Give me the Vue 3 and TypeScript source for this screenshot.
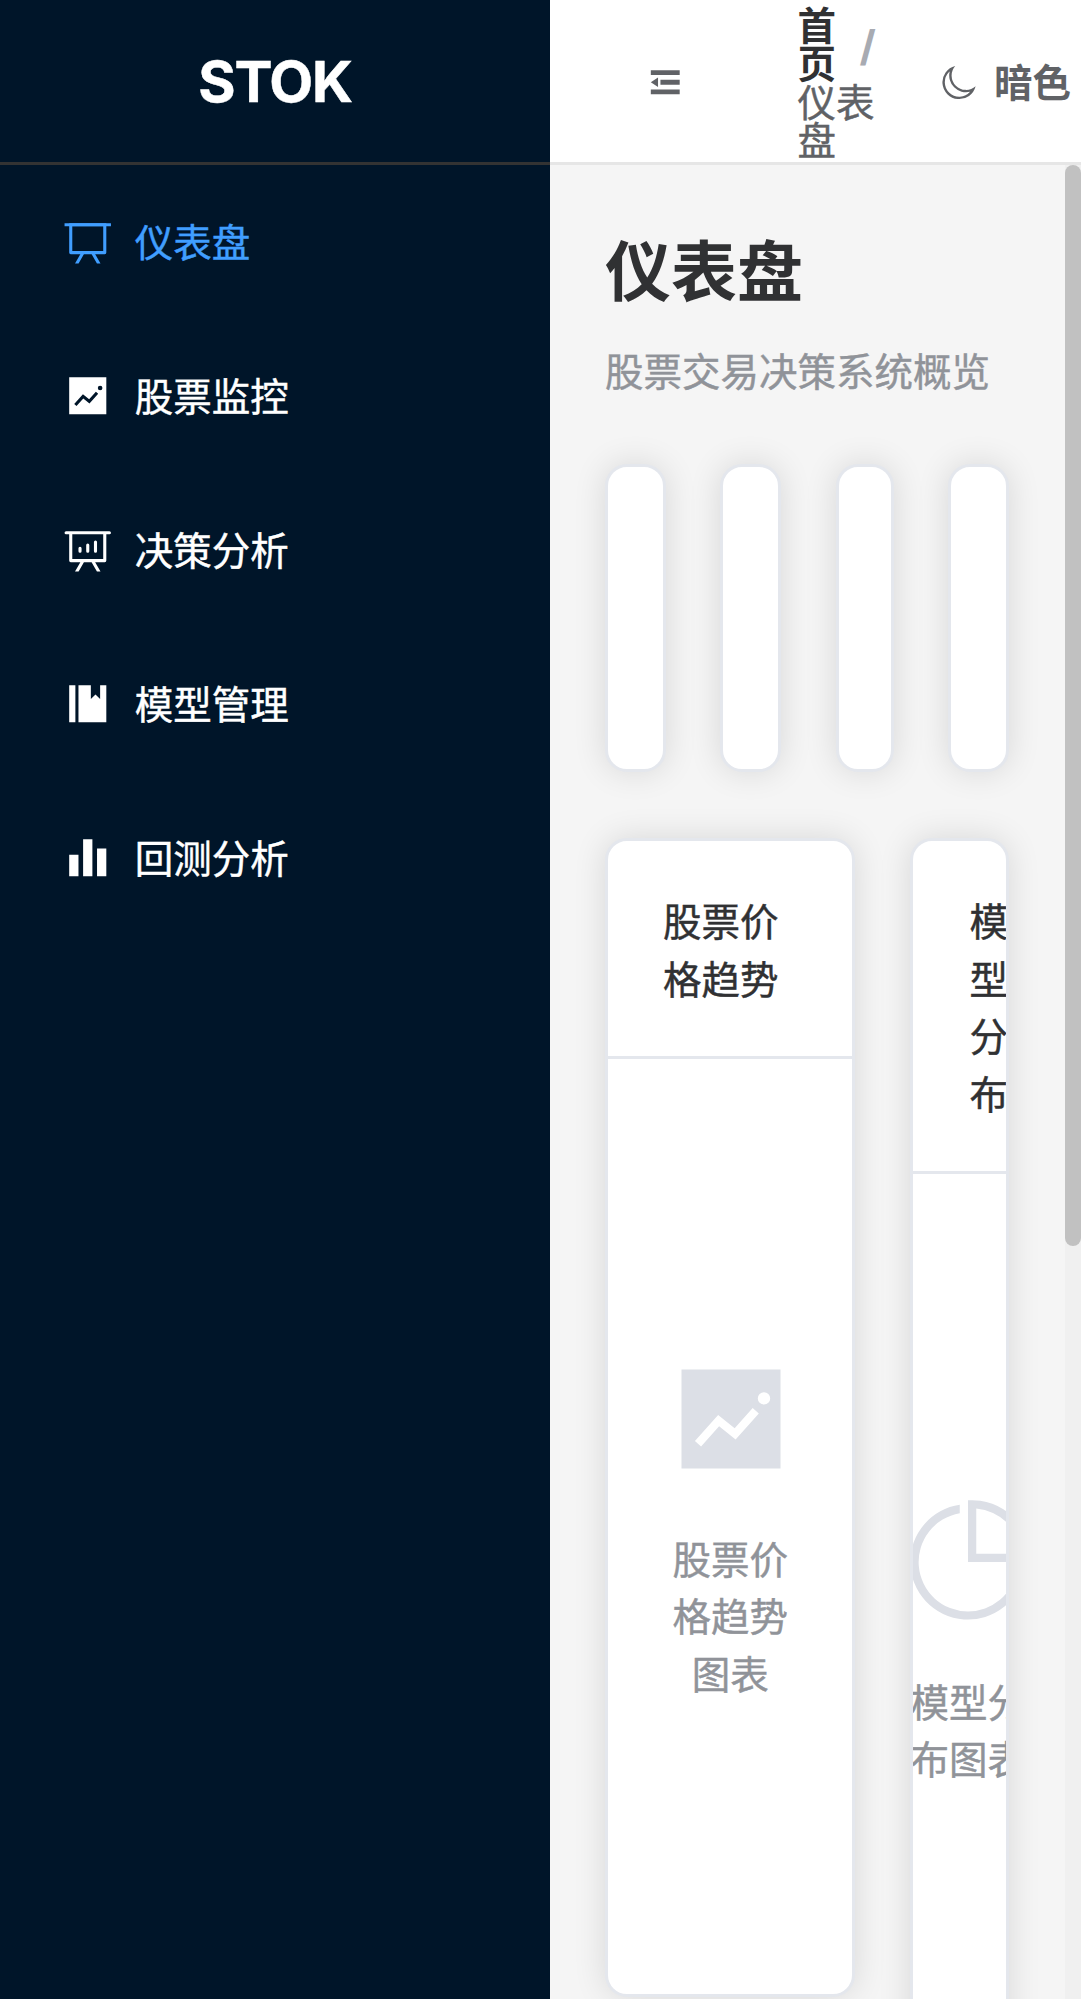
<script setup lang="ts">
interface MenuItem {
  label: string
  paths: string[]
  active?: boolean
}

const trendPath =
  'M128 896V128h768v768zm291.712-327.296 128 102.4 180.16-201.792-47.744-42.624-139.84 156.608-128-102.4-180.16 201.792 47.744 42.624 139.84-156.608zM816 352a48 48 0 1 0-96 0 48 48 0 0 0 96 0'

const menu: MenuItem[] = [
  {
    label: '仪表盘',
    active: true,
    paths: [
      'M32 128h960v64H32z',
      'M192 192v512h640V192zm-64-64h768v608a32 32 0 0 1-32 32H160a32 32 0 0 1-32-32z',
      'M322.176 960H248.32l144.64-250.56 55.424 32zm453.888 0h-73.856L576 741.44l55.424-32z',
    ],
  },
  { label: '股票监控', paths: [trendPath] },
  {
    label: '决策分析',
    paths: [
      'm665.216 768 110.848 192h-73.856L591.36 768H433.024L322.176 960H248.32l110.848-192H160a32 32 0 0 1-32-32V192H64a32 32 0 0 1 0-64h896a32 32 0 1 1 0 64h-64v544a32 32 0 0 1-32 32zM832 192H192v512h640zM352 448a32 32 0 0 1 32 32v64a32 32 0 0 1-64 0v-64a32 32 0 0 1 32-32m160-64a32 32 0 0 1 32 32v128a32 32 0 0 1-64 0V416a32 32 0 0 1 32-32m160-64a32 32 0 0 1 32 32v192a32 32 0 1 1-64 0V352a32 32 0 0 1 32-32',
    ],
  },
  {
    label: '模型管理',
    paths: ['M576 128v288l96-96 96 96V128h128v768H320V128zm-448 0h128v768H128z'],
  },
  {
    label: '回测分析',
    paths: ['M416 896V128h192v768zm-288 0V448h192v448zm576 0V320h192v576z'],
  },
]

const charts = [
  { title: '股票价格趋势', caption: '股票价格趋势图表', kind: 'trend', paths: [trendPath] },
  {
    title: '模型分布',
    caption: '模型分布图表',
    kind: 'pie',
    paths: [
      'M448 68.48v64.832A384.128 384.128 0 0 0 512 896a384.128 384.128 0 0 0 378.688-320h64.768A448.128 448.128 0 0 1 64 512 448.128 448.128 0 0 1 448 68.48',
      'M576 97.28V448h350.72A384.064 384.064 0 0 0 576 97.28M512 64V33.152A448 448 0 0 1 990.848 512H512z',
    ],
  },
]
</script>

<template>
  <div class="app">
    <aside class="sidebar">
      <div class="logo">STOK</div>
      <nav class="menu">
        <a v-for="item in menu" :key="item.label" class="menu-item" :class="{ active: item.active }">
          <span class="menu-icon">
            <svg viewBox="0 0 1024 1024"><path v-for="d in item.paths" :key="d" :d="d" /></svg>
          </span>
          <span class="menu-label">{{ item.label }}</span>
        </a>
      </nav>
    </aside>

    <div class="body">
      <header class="header">
        <button class="fold" type="button">
          <svg viewBox="0 0 1024 1024">
            <path d="M896 192H128v128h768zm0 256H384v128h512zm0 256H128v128h768zM320 384 128 512l192 128z" />
          </svg>
        </button>
        <div class="breadcrumb">
          <div class="crumb home">
            <span class="crumb-text">首页</span>
            <span class="slash">/</span>
          </div>
          <div class="crumb current">仪表盘</div>
        </div>
        <div class="theme">
          <svg viewBox="0 0 1024 1024">
            <path
              d="M240.448 240.448a384 384 0 1 0 559.424 525.696 448 448 0 0 1-542.016-542.08 390.592 390.592 0 0 0-17.408 16.384m181.056 362.048a384 384 0 0 0 525.632 16.384A448 448 0 1 1 405.056 76.8a384 384 0 0 0 16.448 525.696"
            />
          </svg>
          <span class="theme-label">暗色</span>
        </div>
      </header>

      <div class="scroll-area">
        <main class="content">
          <h1>仪表盘</h1>
          <p class="subtitle">股票交易决策系统概览</p>
          <div class="stats">
            <div v-for="n in 4" :key="n" class="card stat"></div>
          </div>
          <div class="charts">
            <section v-for="chart in charts" :key="chart.title" class="card" :class="chart.kind">
              <div class="card-header">{{ chart.title }}</div>
              <div class="card-body">
                <div class="placeholder">
                  <svg viewBox="0 0 1024 1024"><path v-for="d in chart.paths" :key="d" :d="d" /></svg>
                  <p>{{ chart.caption }}</p>
                </div>
              </div>
            </section>
          </div>
        </main>
        <div class="scrollbar"><div class="thumb"></div></div>
      </div>
    </div>
  </div>
</template>

<style>
body {
  margin: 0;
  overflow: hidden;
}
</style>

<style scoped>
* {
  box-sizing: border-box;
}

.app {
  display: flex;
  width: 1081px;
  height: 1999px;
  overflow: hidden;
  font-family: 'Inter', 'Noto Sans CJK SC', sans-serif;
  font-size: 38.5px;
  color: #303133;
}

svg {
  display: block;
  flex: none;
  fill: currentColor;
}

.menu-label,
.current,
.subtitle,
.card-header,
.placeholder p {
  -webkit-text-stroke: 0.45px currentColor;
}

.sidebar {
  flex: none;
  width: 550px;
  background: #001529;
  color: #fff;
}

.logo {
  display: flex;
  align-items: center;
  justify-content: center;
  height: 165px;
  border-bottom: 3px solid #333;
  font-size: 57px;
  font-weight: 700;
  letter-spacing: -1.3px;
  -webkit-text-stroke: 0.5px currentColor;
}

.menu-item {
  display: flex;
  align-items: center;
  height: 154px;
  padding: 0 55px;
}

.menu-item.active {
  color: #409eff;
}

.menu-icon {
  display: flex;
  justify-content: center;
  width: 66px;
  margin-right: 13.75px;
}

.menu-icon svg {
  width: 49.5px;
  height: 49.5px;
}

.menu-label {
  padding-bottom: 5px;
}

.body {
  flex: none;
  display: flex;
  flex-direction: column;
  width: 531px;
}

.header {
  flex: none;
  display: flex;
  align-items: center;
  height: 165px;
  padding: 2.5px 0 0 55px;
  border-bottom: 3px solid #e6e6e6;
  background: #fff;
  color: #606266;
}

.fold {
  flex: none;
  width: 121px;
  padding: 0 41.25px;
  border: 0;
  background: none;
  color: inherit;
}

.fold svg,
.theme svg {
  width: 38.5px;
  height: 38.5px;
}

.breadcrumb {
  flex: none;
  width: 88px;
  margin-left: 71.5px;
  padding-top: 3px;
  line-height: 38.5px;
}

.home {
  display: flex;
  align-items: center;
  color: #303133;
  font-weight: 700;
}

.crumb-text {
  flex: none;
  width: 38.5px;
}

.slash {
  margin-left: 23.5px;
  padding-top: 2px;
  color: #a8abb2;
  font-size: 42px;
}

.current {
  width: 78px;
}

.theme {
  display: flex;
  align-items: center;
  gap: 16px;
  margin-left: 54px;
  font-weight: 700;
  white-space: nowrap;
}

.theme-label {
  padding-bottom: 5px;
}

.scroll-area {
  flex: 1;
  display: flex;
  min-height: 0;
  background: #f5f5f5;
}

.content {
  width: 514.5px;
  height: 1834px;
  overflow: hidden;
  padding: 58px 55px 0;
}

h1 {
  margin: 0 0 22px;
  font-size: 66px;
  font-weight: 600;
  line-height: 99px;
}

.subtitle {
  margin: 0 0 62px;
  color: #909399;
  line-height: 57.75px;
  white-space: nowrap;
}

.card {
  overflow: hidden;
  border: 3px solid #e4e7ed;
  border-radius: 22px;
  background: #fff;
  box-shadow: 0 0 33px rgba(0, 0, 0, 0.12);
}

.stats {
  display: grid;
  grid-template-columns: 60.7px 60.7px 58px 60.7px;
  column-gap: 54.7px;
  margin-bottom: 66px;
}

.stat {
  height: 308.5px;
}

.charts {
  display: grid;
  grid-template-columns: 250.4px 99.2px;
  column-gap: 54.6px;
  align-items: start;
}

.card-header {
  padding: 52.5px 55px 46.5px;
  border-bottom: 3px solid #e4e7ed;
  line-height: 57.75px;
}

.pie .card-header {
  padding-left: 56.5px;
  padding-right: 0;
}

.card-body {
  display: flex;
  justify-content: center;
  width: 100%;
  padding: 55px 0;
}

.pie .card-body {
  width: 110.5px;
}

.placeholder {
  flex: none;
  display: flex;
  flex-direction: column;
  align-items: center;
  justify-content: center;
  width: 132px;
  height: 825px;
  padding-top: 2px;
  color: #909399;
  text-align: center;
}

.trend .placeholder {
  padding-top: 5px;
}

.trend .placeholder svg {
  margin-left: 2px;
}

.placeholder svg {
  width: 132px;
  height: 132px;
  margin-bottom: 47px;
  color: #dcdfe6;
}

.placeholder p {
  margin: 0;
  line-height: 57.75px;
}

.scrollbar {
  flex: none;
  width: 16.5px;
  background: #f0f0f0;
}

.thumb {
  height: 1081px;
  border-radius: 8.25px;
  background: #c1c1c1;
}
</style>
